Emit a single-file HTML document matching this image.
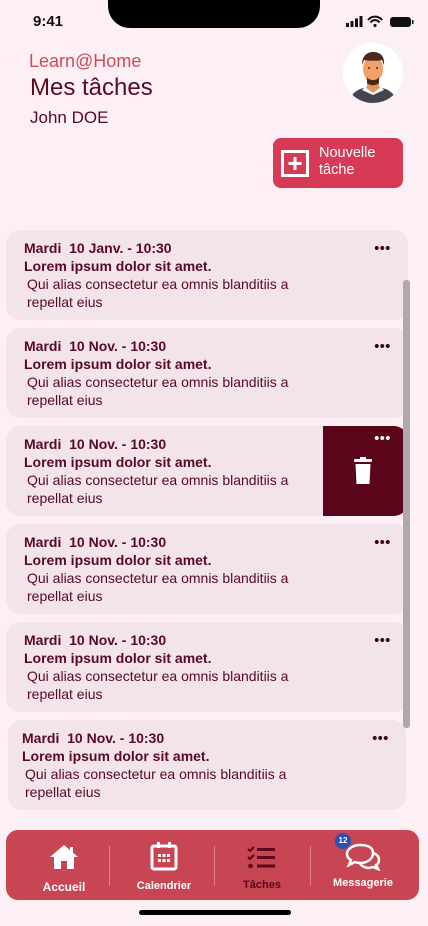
<!DOCTYPE html>
<html><head><meta charset="utf-8"><style>
*{margin:0;padding:0;box-sizing:border-box}
body{width:428px;height:926px;background:#fcf0f5;font-family:"Liberation Sans",sans-serif;position:relative;overflow:hidden;color:#5a0a1e}
.abs{position:absolute}
.card{position:absolute;left:6px;width:402px;height:90px;background:#f2e4ea;border-radius:14px;overflow:hidden}
.card .d{position:absolute;left:18px;top:10px;font-weight:bold;font-size:14px}
.card .t{position:absolute;left:18px;top:28px;font-weight:bold;font-size:14px}
.card .p{position:absolute;left:21px;top:45px;font-size:14px;line-height:18px;width:300px}
.dots{position:absolute;right:18px;top:16px;width:16px;height:4px;background:radial-gradient(circle,#3a0010 1.8px,transparent 2.2px) 0 0/5.5px 4px repeat-x}
.dots.w{background:radial-gradient(circle,#fff 1.8px,transparent 2.2px) 0 0/5.5px 4px repeat-x;top:10px}
.nav{position:absolute;left:6px;top:830px;width:413px;height:70px;background:#c84654;border-radius:12px}
.it{position:absolute;top:0;height:70px;text-align:center;color:#fff;font-weight:bold;font-size:11px}
.sep{position:absolute;top:16px;width:1px;height:40px;background:#d98088}
</style></head><body>
<div class="abs" style="left:108px;top:0;width:212px;height:28px;background:#000;border-radius:0 0 22px 22px"></div>
<div class="abs" style="left:33px;top:13px;font-size:15px;font-weight:bold;color:#111">9:41</div>
<svg class="abs" style="left:346px;top:15px" width="68" height="14" viewBox="0 0 68 14">
<rect x="0" y="8" width="3" height="4" fill="#111"/><rect x="4.5" y="6" width="3" height="6" fill="#111"/><rect x="9" y="3.5" width="3" height="8.5" fill="#111"/><rect x="13.5" y="1" width="3" height="11" fill="#111"/>
<path d="M22 5a9 9 0 0 1 14 0M24.5 7.5a5.5 5.5 0 0 1 9 0" stroke="#111" stroke-width="2" fill="none"/><circle cx="29" cy="10.5" r="1.6" fill="#111"/>
<rect x="44" y="2" width="21" height="10" rx="3" fill="#111"/><rect x="66" y="5" width="1.5" height="4" fill="#111"/>
</svg>
<div class="abs" style="left:29px;top:51px;font-size:18px;color:#d0485c">Learn@Home</div>
<div class="abs" style="left:30px;top:74px;font-size:24px;color:#5a0a1e">Mes tâches</div>
<div class="abs" style="left:30px;top:108px;font-size:17px;color:#5a0a1e">John DOE</div>
<svg class="abs" style="left:343px;top:43px" width="60" height="60" viewBox="0 0 60 60">
<clipPath id="c"><circle cx="30" cy="30" r="30"/></clipPath><circle cx="30" cy="30" r="30" fill="#fff"/>
<g clip-path="url(#c)"><path d="M6 60c2-12 12-16 24-16s22 4 24 16z" fill="#45434f"/><path d="M24 38h12v8l-6 4-6-4z" fill="#e8935c"/><path d="M22 44l8 6 8-6 3 3-11 5-11-5z" fill="#fff"/>
<ellipse cx="30" cy="26" rx="10" ry="13" fill="#f2a06a"/><path d="M19 22c0-10 6-13 11-13s12 2 11 13l-2-5c-4 1-12 1-18 0z" fill="#4a2a1a"/><path d="M24 34c2 4 10 4 12 0v6c-3 3-9 3-12 0z" fill="#4a2a1a"/><circle cx="26" cy="25" r="1" fill="#333"/><circle cx="34" cy="25" r="1" fill="#333"/></g></svg>
<div class="abs" style="left:273px;top:138px;width:130px;height:50px;background:#d63a55;border-radius:8px"></div>
<svg class="abs" style="left:281px;top:150px" width="28" height="27" viewBox="0 0 28 27"><rect x="1.5" y="1.5" width="25" height="24" fill="none" stroke="#fff" stroke-width="3"/><path d="M14 7v13M7.5 13.5h13" stroke="#fff" stroke-width="3"/></svg>
<div class="abs" style="left:319px;top:145px;font-size:14.5px;line-height:17px;color:#fff">Nouvelle<br>tâche</div>

<div class="card" style="top:230px"><div class="d">Mardi&nbsp; 10 Janv. - 10:30</div><div class="t">Lorem ipsum dolor sit amet.</div><div class="p">Qui alias consectetur ea omnis blanditiis a repellat eius</div><div class="dots"></div></div>
<div class="card" style="top:328px"><div class="d">Mardi&nbsp; 10 Nov. - 10:30</div><div class="t">Lorem ipsum dolor sit amet.</div><div class="p">Qui alias consectetur ea omnis blanditiis a repellat eius</div><div class="dots"></div></div>
<div class="card" style="top:426px"><div class="d">Mardi&nbsp; 10 Nov. - 10:30</div><div class="t">Lorem ipsum dolor sit amet.</div><div class="p">Qui alias consectetur ea omnis blanditiis a repellat eius</div>
<div style="position:absolute;left:317px;top:0;width:85px;height:90px;background:#5a0519"></div><div class="dots w"></div>
<svg style="position:absolute;left:347px;top:31px" width="20" height="28" viewBox="0 0 20 28"><rect x="1" y="2" width="18" height="3" rx="1" fill="#fff"/><rect x="7" y="0" width="6" height="3" fill="#fff"/><path d="M2.5 7h15l-1 20h-13z" fill="#fff"/></svg></div>
<div class="card" style="top:524px"><div class="d">Mardi&nbsp; 10 Nov. - 10:30</div><div class="t">Lorem ipsum dolor sit amet.</div><div class="p">Qui alias consectetur ea omnis blanditiis a repellat eius</div><div class="dots"></div></div>
<div class="card" style="top:622px"><div class="d">Mardi&nbsp; 10 Nov. - 10:30</div><div class="t">Lorem ipsum dolor sit amet.</div><div class="p">Qui alias consectetur ea omnis blanditiis a repellat eius</div><div class="dots"></div></div>
<div class="card" style="top:720px;left:8px;width:398px"><div class="d" style="left:14px">Mardi&nbsp; 10 Nov. - 10:30</div><div class="t" style="left:14px">Lorem ipsum dolor sit amet.</div><div class="p" style="left:17px">Qui alias consectetur ea omnis blanditiis a repellat eius</div><div class="dots"></div></div>
<div class="abs" style="left:403px;top:280px;width:7px;height:448px;background:#b0a8ac;border-radius:3px"></div>

<div class="nav">
<div class="sep" style="left:103px"></div><div class="sep" style="left:208px"></div><div class="sep" style="left:304px"></div>
<div class="it" style="left:18px;width:80px"><svg style="margin-top:14px" width="30" height="26" viewBox="0 0 30 26"><path d="M15 1L1 13h4v12h7v-8h6v8h7V13h4z" fill="#fff"/><rect x="21" y="3" width="3" height="6" fill="#fff"/></svg><div style="margin-top:7px;font-size:12px">Accueil</div></div>
<div class="it" style="left:118px;width:80px"><svg style="margin-top:11px" width="28" height="30" viewBox="0 0 28 30"><rect x="2" y="5" width="24" height="23" rx="2" fill="none" stroke="#fff" stroke-width="3"/><rect x="7" y="1" width="3" height="6" fill="#fff"/><rect x="18" y="1" width="3" height="6" fill="#fff"/><g fill="#fff"><rect x="8" y="13" width="3" height="3"/><rect x="12.5" y="13" width="3" height="3"/><rect x="17" y="13" width="3" height="3"/><rect x="8" y="18" width="3" height="3"/><rect x="12.5" y="18" width="3" height="3"/><rect x="17" y="18" width="3" height="3"/></g></svg><div style="margin-top:6px">Calendrier</div></div>
<div class="it" style="left:216px;width:80px;color:#5a0519"><svg style="margin-top:15px" width="30" height="24" viewBox="0 0 30 24"><path d="M1 4l2 2 4-4M1 12l2 2 4-4" stroke="#5a0519" stroke-width="2" fill="none"/><circle cx="3.5" cy="21" r="2.3" fill="#5a0519"/><rect x="10" y="3" width="18" height="3" fill="#5a0519"/><rect x="10" y="11" width="18" height="3" fill="#5a0519"/><rect x="10" y="19.5" width="18" height="3" fill="#5a0519"/></svg><div style="margin-top:7px">Tâches</div></div>
<div class="it" style="left:316px;width:82px"><svg style="margin-top:13px" width="36" height="28" viewBox="0 0 36 28"><path d="M15 2C8 2 2 6 2 11c0 3 2 5 4 6l-2 5 6-3c2 1 3 1 5 1 7 0 13-4 13-10S22 2 15 2z" fill="none" stroke="#fff" stroke-width="2.5"/><path d="M28 10c4 1 6 4 6 7 0 2-1 4-3 5l2 4-5-2c-1 0-3 1-4 1-4 0-7-2-9-4" fill="none" stroke="#fff" stroke-width="2.5"/></svg><div style="margin-top:3px">Messagerie</div></div>
<div class="abs" style="left:329px;top:3px;width:16px;height:16px;border-radius:8px;background:#2a50b0;color:#fff;font-size:8px;font-weight:bold;text-align:center;line-height:16px">12</div>
</div>
<div class="abs" style="left:139px;top:910px;width:152px;height:5px;background:#000;border-radius:3px"></div>
</body></html>
